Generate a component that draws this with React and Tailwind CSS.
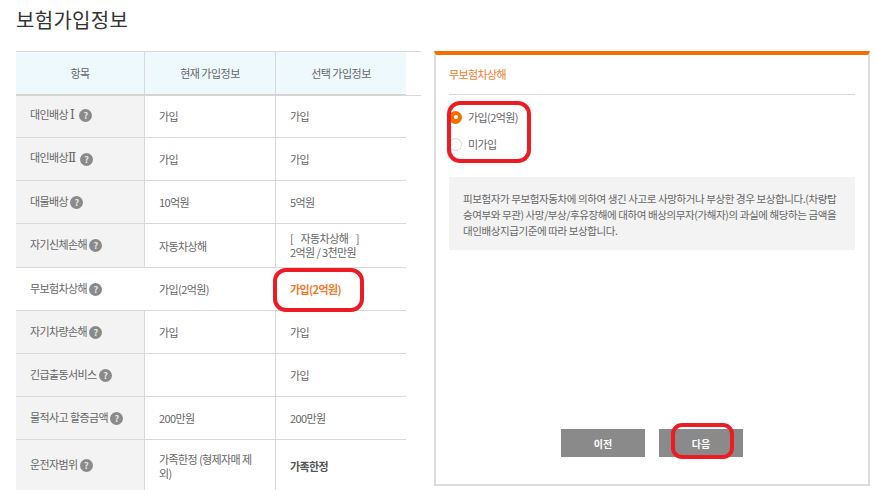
const font = { fontFamily: '"Noto Sans CJK KR", "Noto Sans", sans-serif' };

function Help() {
  return (
    <span className="ml-[2px] inline-flex h-[13px] w-[13px] shrink-0 items-center justify-center rounded-full bg-[#8a8a8a] text-[9px] font-bold leading-none text-[#e8e8e8]">?</span>
  );
}

const roman = { fontFamily: '"DejaVu Serif", "Liberation Serif", serif' };

const rows = [
  { h: 'h-[42px]', nudge: 'pb-[2px]', label: <>대인배상 <span className="mr-[3px] text-[12px]" style={roman}>Ⅰ</span></>, cur: '가입', sel: '가입' },
  { h: 'h-[43px]', label: <>대인배상<span className="mr-[2px] text-[12px]" style={roman}>Ⅱ</span></>, cur: '가입', sel: '가입' },
  { h: 'h-[43px]', label: '대물배상', cur: '10억원', sel: '5억원' },
  { h: 'h-[44px]', label: '자기신체손해', cur: '자동차상해', sel: (<div className="mb-[2px]"><div className="whitespace-pre">{'[    자동차상해    ]'}</div><div>2억원 / 3천만원</div></div>) },
  { h: 'h-[43px]', label: '무보험차상해', cur: '가입(2억원)', sel: <span className="font-bold text-[#f47a2a]">가입(2억원)</span>, active: true },
  { h: 'h-[43px]', label: '자기차량손해', cur: '가입', sel: '가입' },
  { h: 'h-[43px]', label: '긴급출동서비스', cur: '', sel: '가입' },
  { h: 'h-[43px]', label: '물적사고 할증금액', cur: '200만원', sel: '200만원' },
  { h: 'h-[52px]', label: '운전자범위', cur: '가족한정 (형제자매 제외)', sel: <span className="font-bold text-[#555]">가족한정</span> },
];

function Row({ r }) {
  const v = r.active ? '' : 'border-r border-[#d9d9d9]';
  const n = r.nudge || '';
  return (
    <div className={`flex ${r.h} w-[390px] shrink-0 border-b border-[#d9d9d9] text-[11px] leading-[14px] tracking-[-0.6px] text-[#666]`}>
      <div className={`flex w-[129px] shrink-0 items-center pl-[14px] ${n} ${r.active ? 'bg-white' : 'bg-[#f3f3f3]'} ${v}`}>
        <span className="mb-[3px] whitespace-nowrap">{r.label}</span>
        <Help />
      </div>
      <div className={`flex w-[131px] shrink-0 items-center px-[14px] ${n} ${v}`}>
        <div>{r.cur}</div>
      </div>
      <div className={`flex flex-1 items-center px-[14px] ${n}`}>
        <div>{r.sel}</div>
      </div>
    </div>
  );
}

function Mark({ x, y, w, h, r }) {
  return (
    <svg className="pointer-events-none absolute" style={{ left: x, top: y }} width={w} height={h}>
      <rect x="2" y="2" width={w - 4} height={h - 4} rx={r} fill="none" stroke="#ed1c24" strokeWidth="4" />
    </svg>
  );
}

export default function App() {
  return (
    <div className="relative h-[490px] w-[876px] overflow-hidden bg-white" style={font}>
      <h1 className="h-[51px] pl-4 pt-[5px] text-[20px] font-normal leading-[30px] tracking-[0.3px] text-[#333]">보험가입정보</h1>
      <div className="flex items-start pl-4">
        <div className="flex w-[405px] shrink-0 flex-col border-t border-[#d9d9d9]">
          <div className="flex h-[44px] w-full border-b border-[#d9d9d9]">
            <div className="flex h-[44px] w-[390px] border-b-2 border-[#d5d5d5] bg-[#eef9fe] text-[11px] tracking-[-0.5px] text-[#666]">
              <div className="flex w-[129px] items-center justify-center border-r border-[#d9d9d9]">항목</div>
              <div className="flex w-[131px] items-center justify-center border-r border-[#d9d9d9]">현재 가입정보</div>
              <div className="flex flex-1 items-center justify-center">선택 가입정보</div>
            </div>
          </div>
          {rows.map((r, i) => <Row key={i} r={r} />)}
        </div>
        <div className="ml-[13px] flex h-[435px] w-[436px] shrink-0 flex-col border-x-2 border-b-2 border-t-4 border-x-[#dcdcdc] border-b-[#dcdcdc] border-t-[#f07000] px-[13px]">
          <div className="flex h-[40px] shrink-0 items-center border-b border-[#d9d9d9] text-[11px] tracking-[-0.6px] text-[#f47a2a]">무보험차상해</div>
          <div className="mt-[15px] flex h-[14px] items-center text-[11px] tracking-[-0.6px] text-[#666]">
            <span className="flex h-[13px] w-[13px] items-center justify-center rounded-full bg-[#f07000]"><span className="h-[4px] w-[4px] rounded-full bg-white" /></span>
            <span className="ml-[6px]">가입(2억원)</span>
          </div>
          <div className="mt-[13px] flex h-[14px] items-center text-[11px] tracking-[-0.6px] text-[#666]">
            <span className="h-[13px] w-[13px] rounded-full border border-[#d9d9d9] bg-white" />
            <span className="ml-[6px]">미가입</span>
          </div>
          <div className="mt-[26px] h-[73px] bg-[#f3f3f3] px-[14px] pt-[14px] text-[10.5px] leading-[16px] tracking-[-0.4px] text-[#666]">
            피보험자가 무보험자동차에 의하여 생긴 사고로 사망하거나 부상한 경우 보상합니다.(차량탑승여부와 무관) 사망/부상/후유장해에 대하여 배상의무자(가해자)의 과실에 해당하는 금액을 대인배상지급기준에 따라 보상합니다.
          </div>
          <div className="mt-auto mb-[27px] flex justify-center gap-[14px]">
            <button className="h-[28px] w-[84px] bg-[#8a8a8a] text-[10px] font-bold text-white">이전</button>
            <button className="h-[28px] w-[84px] bg-[#8a8a8a] text-[10px] font-bold text-white">다음</button>
          </div>
        </div>
      </div>
      <Mark x={273} y={268} w={91} h={44} r={11} />
      <Mark x={447} y={101} w={84} h={62} r={11} />
      <Mark x={671} y={423} w={63} h={36} r={9} />
    </div>
  );
}
